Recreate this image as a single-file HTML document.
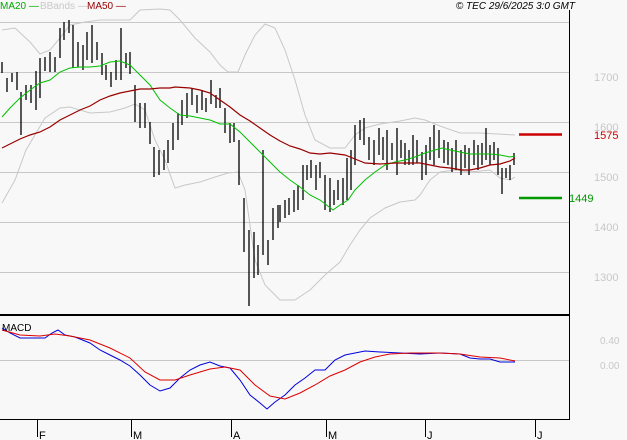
<!DOCTYPE html>
<html><head><meta charset="utf-8"><style>
html,body{margin:0;padding:0;background:#f8f8f8;}
svg{display:block;}
text{font-family:"Liberation Sans",sans-serif;}
</style></head><body>
<svg width="627" height="440" viewBox="0 0 627 440" xmlns="http://www.w3.org/2000/svg">
<rect width="627" height="440" fill="#f8f8f8"/>
<g stroke="#c8c8c8" stroke-width="1">
<line x1="0" y1="22.5" x2="569" y2="22.5"/>
<line x1="0" y1="72.5" x2="569" y2="72.5"/>
<line x1="0" y1="122.5" x2="569" y2="122.5"/>
<line x1="0" y1="172.5" x2="569" y2="172.5"/>
<line x1="0" y1="222.5" x2="569" y2="222.5"/>
<line x1="0" y1="272.5" x2="569" y2="272.5"/>
<line x1="0" y1="360.5" x2="569" y2="360.5"/>
</g>
<g fill="none" stroke="#c8c8c8" stroke-width="1">
<polyline points="2,30 15,28 30,42 40,54 50,50 60,38 70,25 85,22 100,20 130,20 140,10 160,9 170,10 180,20 195,38 210,52 220,65 228,72 238,72 245,55 255,35 265,24 275,28 285,50 295,80 305,115 315,140 330,148 345,148 355,135 365,128 380,124 400,121 415,118 425,120 440,126 460,133 480,133 515,135"/>
<polyline points="2,203 15,180 26,150 35,135 45,118 60,108 70,107 80,110 90,113 110,112 125,108 135,104 145,110 155,140 165,160 175,188 185,185 200,182 215,177 228,173 238,172 245,190 255,260 265,285 280,300 295,300 310,290 325,275 340,262 350,245 360,230 370,218 385,208 400,202 415,200 420,195 430,180 440,172 455,170 470,172 490,170 500,178 510,180 515,177"/>
</g>
<path stroke="#000" stroke-width="1.3" fill="none" d="
M2,62V73M7,78V92M12,73V82M17,72V90M21,92V135M26,85V100M31,85V103M36,71V110M40,58V98M45,57V71M50,52V72M55,57V72M60,28V58M64,22V40M69,20V33M73,25V68M78,42V67M83,45V70M87,32V60M92,25V63M97,42V60M102,53V75M106,65V80M111,72V87M116,60V80M121,28V80M126,53V68M130,52V74M135,85V122M140,103V128M145,103V128M150,122V144M154,147V177M159,150V175M164,150V170M168,140V163M173,123V150M178,113V140M182,100V125M187,93V118M192,88V105M197,95V113M202,90V110M206,98V112M211,80V104M216,95V108M220,88V108M225,108V133M230,123V143M234,123V142M239,140V185M244,198V252M249,230V306M254,232V278M258,245V275M263,150V255M268,240V265M273,208V240M278,205V228M280,205V222M285,200V218M289,198V215M294,190V212M298,185V210M303,165V200M307,165V180M311,160V178M316,165V190M320,162V178M325,175V210M330,178V212M334,190V205M338,180V200M343,178V205M347,158V200M351,150V190M355,125V165M360,120V140M364,118V145M369,137V160M374,140V165M379,128V155M383,137V160M387,130V170M392,143V160M397,128V175M401,140V158M405,143V165M409,150V165M413,135V165M417,140V163M422,152V180M426,145V175M430,137V160M434,125V165M439,130V158M444,140V163M448,142V165M452,148V172M456,140V170M461,150V175M465,145V168M469,148V175M474,140V165M478,145V170M482,143V165M486,128V160M490,145V165M494,142V160M498,148V175M502,168V194M506,168V178M510,165V180M514,153V165"/>
<polyline fill="none" stroke="#00c000" stroke-width="1" points="2,117 10,108 20,98 30,90 40,83 50,80 60,72 70,68 80,67 90,67 100,66 110,62 120,61 130,65 140,75 150,85 160,100 170,108 180,115 190,116 200,118 210,120 220,124 230,124 240,132 250,142 260,152 270,162 280,172 290,180 300,187 310,195 320,200 333,210 340,205 348,200 355,190 365,180 375,172 385,165 395,162 405,160 415,157 425,153 435,150 442,148 450,150 460,152 470,154 480,154 490,154 500,155 510,157 515,156"/>
<polyline fill="none" stroke="#990000" stroke-width="1.2" points="2,148 10,144 20,139 30,135 40,132 50,127 60,120 70,115 80,110 90,106 100,100 110,96 120,93 130,91 140,89 150,89 160,88 170,88 175,87 190,88 200,90 210,93 220,100 230,107 240,115 250,121 260,128 270,135 280,141 290,146 300,149 310,153 320,154 330,153 345,155 355,159 365,163 380,164 395,163 405,163 420,163 430,165 440,167 450,168 462,170 470,170 480,168 490,165 500,164 510,161 515,158"/>
<line x1="0" y1="315" x2="569" y2="315" stroke="#000" stroke-width="2"/>
<line x1="0" y1="419.5" x2="569" y2="419.5" stroke="#000" stroke-width="1"/>
<line x1="569.5" y1="10" x2="569.5" y2="420" stroke="#000" stroke-width="1"/>
<g stroke="#000" stroke-width="1">
<line x1="37.5" y1="420" x2="37.5" y2="437"/>
<line x1="131.5" y1="420" x2="131.5" y2="437"/>
<line x1="231.5" y1="420" x2="231.5" y2="437"/>
<line x1="326.5" y1="420" x2="326.5" y2="437"/>
<line x1="425.5" y1="420" x2="425.5" y2="437"/>
<line x1="535.5" y1="420" x2="535.5" y2="437"/>
</g>
<g font-size="11" fill="#000">
<text x="39" y="439">F</text><text x="133" y="439">M</text><text x="233" y="439">A</text><text x="328" y="439">M</text><text x="427" y="439">J</text><text x="537" y="439">J</text>
</g>
<polyline fill="none" stroke="#0000dd" stroke-width="1" points="2,328 10,333 20,338 35,338 45,338 52,333 58,330 65,335 75,337 90,343 100,350 110,355 120,360 130,366 140,375 150,385 160,391 170,388 180,378 190,370 200,365 210,362 220,366 230,368 240,380 250,395 260,403 267,409 275,402 285,395 295,385 305,378 315,370 325,370 335,360 345,355 355,353 365,351 380,352 400,353 420,354 440,353 460,354 470,358 480,359 490,359 500,362 515,362"/>
<polyline fill="none" stroke="#dd0000" stroke-width="1" points="2,330 20,335 40,336 55,334 70,336 90,340 110,348 130,358 145,372 160,380 175,380 190,375 210,369 225,367 240,370 255,385 270,396 285,399 300,393 315,385 330,376 345,370 360,362 375,357 390,354 410,353 440,353 460,354 480,357 500,358 515,361"/>
<text x="2" y="331" font-size="10" fill="#000">MACD</text>
<g font-size="11" fill="#c8c8c8">
<text x="594" y="81">1700</text><text x="594" y="131">1600</text><text x="594" y="181">1500</text><text x="594" y="231">1400</text><text x="594" y="281">1300</text>
<text x="600" y="344" font-size="10">0.40</text><text x="600" y="369" font-size="10">0.00</text>
</g>
<line x1="519" y1="134.5" x2="562" y2="134.5" stroke="#cc0000" stroke-width="2.5"/>
<text x="594" y="139" font-size="11" fill="#cc0000">1575</text>
<line x1="519" y1="198" x2="562" y2="198" stroke="#009900" stroke-width="2.5"/>
<text x="569" y="202" font-size="11" fill="#009900">1449</text>
<g font-size="10">
<text x="0" y="9" fill="#00aa00">MA20 —</text>
<text x="40" y="9" fill="#c8c8c8">BBands —</text>
<text x="87" y="9" fill="#990000">MA50 —</text>
<text x="575" y="9" fill="#000" font-style="italic" text-anchor="end">© TEC 29/6/2025 3:0 GMT</text>
</g>
</svg>
</body></html>
